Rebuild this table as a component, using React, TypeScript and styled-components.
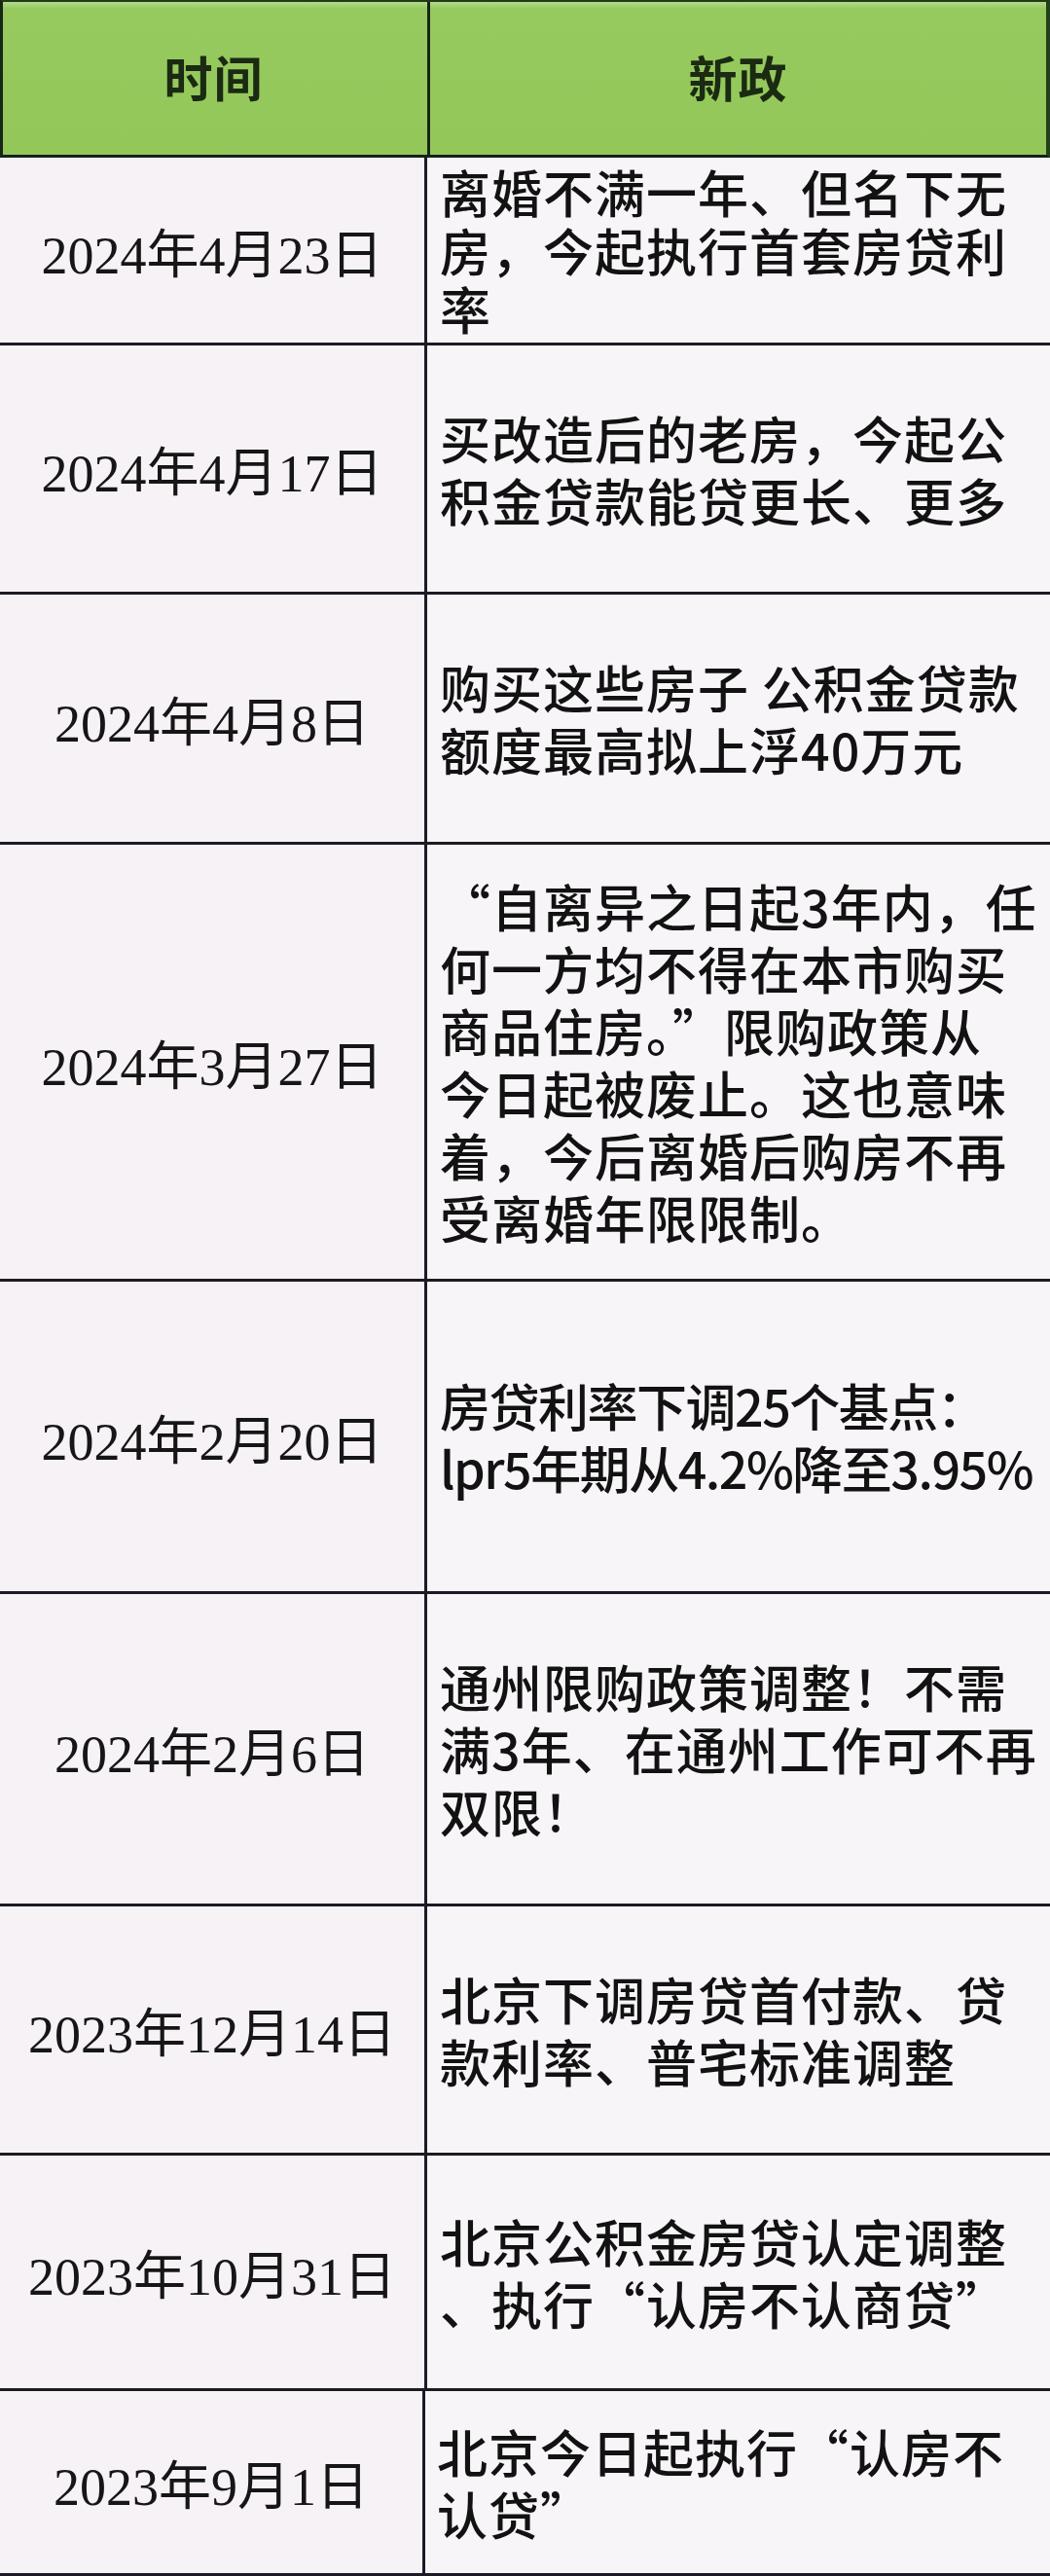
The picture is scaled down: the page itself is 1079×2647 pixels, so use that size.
import React from 'react';
import styled, { createGlobalStyle } from 'styled-components';

const GlobalStyle = createGlobalStyle`
    html, body {
        margin:0;
        padding:0;
        background:#f7f3f7;
    }
    body {
        font-family:"Noto Sans CJK SC", "Noto Sans", sans-serif;
    }
`

type Policy = {
    date: string
    lines: string[]
    height: number
    lineHeight?: number
    tight?: boolean
}

const policies: Policy[] = [
    { date: '2024年4月23日', height: 193, lineHeight: 60, lines: ['离婚不满一年、但名下无', '房，今起执行首套房贷利', '率'] },
    { date: '2024年4月17日', height: 256, lines: ['买改造后的老房，今起公', '积金贷款能贷更长、更多'] },
    { date: '2024年4月8日', height: 257, lines: ['购买这些房子 公积金贷款', '额度最高拟上浮40万元'] },
    {
        date: '2024年3月27日', height: 449, lines: [
            '“自离异之日起3年内，任',
            '何一方均不得在本市购买',
            '商品住房。”限购政策从',
            '今日起被废止。这也意味',
            '着，今后离婚后购房不再',
            '受离婚年限限制。',
        ]
    },
    { date: '2024年2月20日', height: 321, tight: true, lines: ['房贷利率下调25个基点：', 'lpr5年期从4.2%降至3.95%'] },
    { date: '2024年2月6日', height: 321, lines: ['通州限购政策调整！不需', '满3年、在通州工作可不再', '双限！'] },
    { date: '2023年12月14日', height: 256, lines: ['北京下调房贷首付款、贷', '款利率、普宅标准调整'] },
    { date: '2023年10月31日', height: 242, lines: ['北京公积金房贷认定调整', '、执行“认房不认商贷”'] },
]

const lastPolicy: Policy = { date: '2023年9月1日', height: 190, lines: ['北京今日起执行“认房不', '认贷”'] }

const App = () => {
    return (
        <>
            <GlobalStyle />
            <Table>
                <HeaderRow>
                    <HeaderCell $left>时间</HeaderCell>
                    <HeaderCell>新政</HeaderCell>
                </HeaderRow>
                {policies.map((policy) => (
                    <Row key={policy.date} $height={policy.height}>
                        <DateCell>{policy.date}</DateCell>
                        <PolicyCell $tight={policy.tight} $lineHeight={policy.lineHeight ?? 64}>
                            {policy.lines.map((line, i) => (
                                <Line key={i}>{line}</Line>
                            ))}
                        </PolicyCell>
                    </Row>
                ))}
                <Row $height={lastPolicy.height} $open>
                    <DateCell $shift>{lastPolicy.date}</DateCell>
                    <PolicyCell $lineHeight={64}>
                        {lastPolicy.lines.map((line, i) => (
                            <Line key={i}>{line}</Line>
                        ))}
                    </PolicyCell>
                </Row>
            </Table>
        </>
    );
};

const Table = styled.div`
    width:1079px;
    display:flex;
    flex-direction:column;
    color:#141414;
`
const HeaderRow = styled.div`
    height:162px;
    display:grid;
    grid-template-columns:439px 1fr;
    box-sizing:border-box;
    border-top:2px solid #1f3a14;
    border-left:3px solid #18261a;
    border-right:4px solid #22401a;
    border-bottom:3px solid #15201a;
    background:linear-gradient(#b3d98e 0, #96ca5e 7px, #93c75a 100%);
`
const HeaderCell = styled.div<{ $left?: boolean }>`
    display:flex;
    align-items:center;
    justify-content:center;
    padding-bottom:6px;
    font-size:50px;
    font-weight:600;
    color:#1b2a12;
    letter-spacing:1px;
    box-sizing:border-box;
    border-right:${(p) => (p.$left ? '3px solid #17251a' : 'none')};
    margin-left:${(p) => (p.$left ? '-3px' : '0')};
`
const Row = styled.div<{ $height: number; $open?: boolean }>`
    height:${(p) => p.$height}px;
    display:grid;
    grid-template-columns:439px 1fr;
    box-sizing:border-box;
    border-left:${(p) => (p.$open ? 'none' : '3px solid #1c1a26')};
    border-bottom:3px solid #1c1a24;
    background:#f8f5f8;
`
const DateCell = styled.div<{ $shift?: boolean }>`
    display:flex;
    align-items:center;
    justify-content:center;
    box-sizing:border-box;
    margin-left:${(p) => (p.$shift ? '0' : '-3px')};
    width:${(p) => (p.$shift ? '437px' : '439px')};
    border-right:3px solid #1c1a26;
    background:#f7f2f6;
    font-family:"Liberation Serif", "Noto Sans CJK SC", serif;
    font-size:54px;
    color:#161616;
    white-space:nowrap;
`
const PolicyCell = styled.div<{ $tight?: boolean; $lineHeight: number }>`
    display:flex;
    flex-direction:column;
    justify-content:center;
    min-width:0;
    padding-left:10px;
    font-size:52px;
    font-weight:500;
    line-height:${(p) => p.$lineHeight}px;
    letter-spacing:${(p) => (p.$tight ? '-1.5px' : '1px')};
    white-space:nowrap;
`
const Line = styled.div`
    color:#121212;
`

export default App;
